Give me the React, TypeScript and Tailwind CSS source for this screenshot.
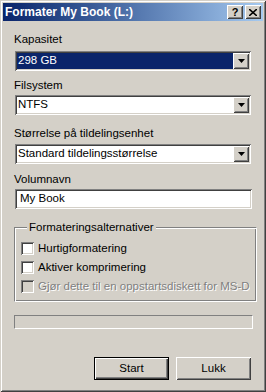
import type { ReactNode } from "react";

const sunken =
  "shadow-[inset_1px_1px_#808080,inset_-1px_-1px_#ffffff,inset_2px_2px_#404040,inset_-2px_-2px_#d4d0c8]";
const raised =
  "shadow-[inset_1px_1px_#ffffff,inset_-1px_-1px_#404040,inset_2px_2px_#d4d0c8,inset_-2px_-2px_#808080]";

function DropArrow() {
  return (
    <div className={`flex h-[16px] w-[16px] items-center justify-center bg-[#d4d0c8] ${raised}`}>
      <svg width="7" height="4" viewBox="0 0 7 4">
        <path d="M0 0h7L3.5 4z" fill="#000" />
      </svg>
    </div>
  );
}

function Combo({ value, selected }: { value: string; selected?: boolean }) {
  return (
    <div className={`flex h-[20px] w-[236px] bg-white p-[2px] ${sunken}`}>
      <div
        className={`flex flex-1 items-center px-[1px] ${selected ? "bg-[#0a246a] text-white" : "text-black"}`}
      >
        {value}
      </div>
      <DropArrow />
    </div>
  );
}

function Label({ children }: { children: ReactNode }) {
  return <div className="h-[13px] leading-[13px]">{children}</div>;
}

function Check({ label, disabled }: { label: string; disabled?: boolean }) {
  return (
    <div className="flex h-[13px] items-center gap-[4px] whitespace-nowrap">
      <div className={`h-[13px] w-[13px] shrink-0 ${disabled ? "bg-[#d4d0c8]" : "bg-white"} ${sunken}`} />
      <span
        className={
          disabled ? "text-[#808080] [text-shadow:1px_1px_0_#ffffff]" : "text-black"
        }
      >
        {label}
      </span>
    </div>
  );
}

function CaptionButton({ children }: { children: ReactNode }) {
  return (
    <div
      className={`flex h-[14px] w-[16px] items-center justify-center bg-[#d4d0c8] text-[11px] font-bold leading-none text-black ${raised}`}
    >
      {children}
    </div>
  );
}

export default function App() {
  return (
    <div
      className={`flex h-[392px] w-[266px] flex-col bg-[#d4d0c8] p-[3px] font-['Liberation_Sans',Arial,sans-serif] text-[11.5px] text-black shadow-[inset_1px_1px_#d4d0c8,inset_-1px_-1px_#404040,inset_2px_2px_#ffffff,inset_-2px_-2px_#808080]`}
    >
      {/* title bar */}
      <div className="flex h-[18px] items-center bg-gradient-to-r from-[#0a246a] to-[#a6caf0] pr-[2px] pl-[2px]">
        <span className="flex-1 text-[12px] font-bold text-white">Formater My Book (L:)</span>
        <div className="flex gap-[2px]">
          <CaptionButton>?</CaptionButton>
          <CaptionButton>
            <svg width="8" height="7" viewBox="0 0 8 7">
              <path d="M0 0l8 7M8 0L0 7" stroke="#000" strokeWidth="1.6" />
            </svg>
          </CaptionButton>
        </div>
      </div>

      <div className="flex flex-1 flex-col px-[11px] pt-[12px]">
        <Label>Kapasitet</Label>
        <div className="mt-[5px] pl-[1px]">
          <Combo value="298 GB" selected />
        </div>

        <div className="mt-[8px]">
          <Label>Filsystem</Label>
        </div>
        <div className="mt-[3px] pl-[1px]">
          <Combo value="NTFS" />
        </div>

        <div className="mt-[12px]">
          <Label>Størrelse på tildelingsenhet</Label>
        </div>
        <div className="mt-[4px] pl-[1px]">
          <Combo value="Standard tildelingsstørrelse" />
        </div>

        <div className="mt-[9px]">
          <Label>Volumnavn</Label>
        </div>
        <div className={`mt-[3px] ml-[1px] flex h-[20px] w-[237px] items-center bg-white px-[5px] ${sunken}`}>
          My Book
        </div>

        <fieldset className="mt-[12px] w-[239px] border border-t-[#808080] border-l-[#808080] border-r-white border-b-white px-[6px] pt-[8px] pb-[8px] shadow-[inset_1px_1px_#ffffff,inset_-1px_-1px_#808080]">
          <legend className="ml-[6px] bg-[#d4d0c8] px-[2px] leading-[13px]">Formateringsalternativer</legend>
          <div className="flex w-[229px] flex-col gap-[6px] overflow-hidden">
            <Check label="Hurtigformatering" />
            <Check label="Aktiver komprimering" />
            <Check label="Gjør dette til en oppstartsdiskett for MS-DOS" disabled />
          </div>
        </fieldset>

        <div className="mt-[13px] h-[14px] w-[239px] border border-t-[#808080] border-l-[#808080] border-r-white border-b-white" />

        <div className="mt-auto mb-[9px] flex justify-end gap-[7px] pr-[1px]">
          <button className="h-[23px] w-[75px] border border-black bg-[#d4d0c8] text-black shadow-[inset_1px_1px_#ffffff,inset_-1px_-1px_#404040,inset_-2px_-2px_#808080]">
            Start
          </button>
          <button className={`h-[23px] w-[75px] bg-[#d4d0c8] text-black ${raised}`}>Lukk</button>
        </div>
      </div>
    </div>
  );
}
